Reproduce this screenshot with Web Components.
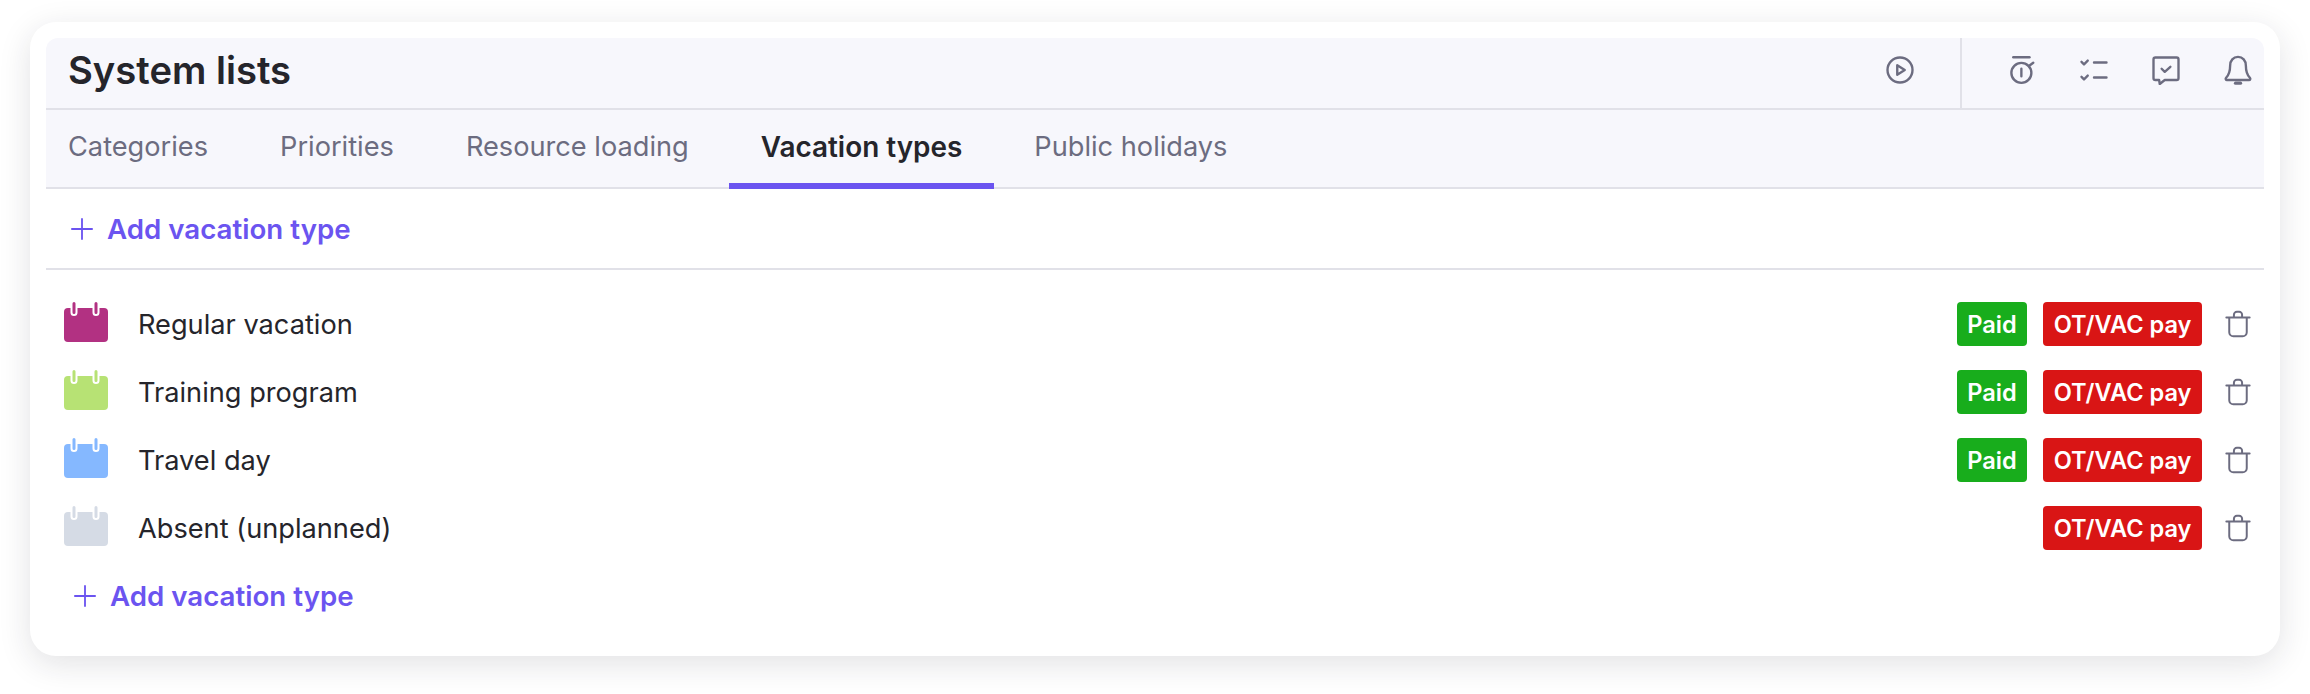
<!DOCTYPE html>
<html>
<head>
<meta charset="utf-8">
<style>
  html, body { margin: 0; background: #fff; }
  body { font-family: Inter, "Liberation Sans", sans-serif; height: 694px; overflow: hidden; }
</style>
</head>
<body>
<system-lists></system-lists>

<script>
// Icon paths, all on a 24x24 box
const ICONS = {
  play: '<circle cx="12" cy="12" r="10"/><path d="M9.800 8.200v7.600l6-3.800z"/>',
  timer: '<path d="M5 1.800h13"/><circle cx="11.500" cy="14.300" r="8"/><path d="M11.500 11v6M17.500 8.800l3.500-2.600"/>',
  tasks: '<path d="M2 5.500l2 2 3-3M2 17.500l2 2 3-3M12 6h10M12 18h10"/>',
  comment: '<path d="M3.500 2h17a1.500 1.500 0 0 1 1.500 1.500v15a1.500 1.500 0 0 1-1.500 1.500h-9.500l-4 3.200-.5-3.200H3.500A1.500 1.500 0 0 1 2 18.500v-15A1.500 1.500 0 0 1 3.500 2z"/><path d="M8.500 11l2.500 2.500 4.500-4"/>',
  bell: '<path d="M12 1.500c-3.800 0-6.300 3-6.300 7 0 5-.9 7.200-3.200 9.700-.7.800-.3 1.800.7 1.800h17.600c1 0 1.400-1 .7-1.800-2.300-2.500-3.200-4.700-3.200-9.700 0-4-2.500-7-6.300-7z"/><path d="M10 22.500h4" stroke-width="2.600"/>',
  trash: '<path d="M2 6.500h20M8.500 6V4a2.500 2.500 0 0 1 2.500-2.500h2A2.500 2.500 0 0 1 15.500 4v2M4.500 7v12a3.500 3.500 0 0 0 3.500 3.500h8a3.500 3.500 0 0 0 3.500-3.500V7"/>',
  plus: '<path d="M12 1v22M1 12h22"/>'
};

class UiIcon extends HTMLElement {
  connectedCallback() {
    const size = this.getAttribute('size') || 24;
    const name = this.getAttribute('name');
    const width = this.getAttribute('stroke') || 2;
    this.attachShadow({ mode: 'open' });
    this.shadowRoot.innerHTML = `
      <style>
        :host { display: inline-flex; flex: none; }
        svg { display: block; fill: none; stroke: currentColor; stroke-linecap: round; stroke-linejoin: round; }
      </style>
      <svg width="${size}" height="${size}" viewBox="0 0 24 24" stroke-width="${width}">${ICONS[name]}</svg>
    `;
  }
}
customElements.define('ui-icon', UiIcon);

class AddButton extends HTMLElement {
  constructor() {
    super();
    this.attachShadow({ mode: 'open' });
    this.shadowRoot.innerHTML = `
      <style>
        :host {
          display: flex;
          align-items: center;
          gap: 14px;
          color: #6b54f0;
          font-size: 27.700px;
          font-weight: 600;
          line-height: 32px;
          cursor: pointer;
        }
      </style>
      <ui-icon name="plus" size="22" stroke="2"></ui-icon>
      <slot></slot>
    `;
  }
}
customElements.define('add-button', AddButton);

class TagBadge extends HTMLElement {
  constructor() {
    super();
    this.attachShadow({ mode: 'open' });
    this.shadowRoot.innerHTML = `
      <style>
        :host {
          display: inline-flex;
          align-items: center;
          height: 44px;
          padding: 0 10.500px;
          border-radius: 4px;
          color: #fff;
          font-size: 23.600px;
          font-weight: 600;
          background: var(--badge-color);
        }
      </style>
      <slot></slot>
    `;
  }
}
customElements.define('tag-badge', TagBadge);

class VacationRow extends HTMLElement {
  connectedCallback() {
    const color = this.getAttribute('color');
    const paid = this.hasAttribute('paid');
    this.attachShadow({ mode: 'open' });
    this.shadowRoot.innerHTML = `
      <style>
        :host {
          display: flex;
          align-items: center;
          height: 68px;
          padding: 0 12px 0 18px;
          color: #25252b;
          font-size: 27.200px;
        }
        .cal { display: block; margin: -4px 28px 0 0; flex: none; }
        .name { flex: 1; }
        .tags { display: flex; gap: 16px; }
        .del { color: #6c6c80; margin-left: 22px; }
        .paid { --badge-color: #18ad1c; }
        .ot { --badge-color: #d91515; }
      </style>
      <svg class="cal" width="46" height="40" viewBox="0 0 46 40">
        <rect x="0" y="6" width="44" height="34" rx="4" fill="${color}"/>
        <path d="M10 0v10.500M32 0v10.500" stroke="#fff" stroke-width="7" stroke-linecap="round"/>
        <path d="M10 1.500v9M32 1.500v9" stroke="${color}" stroke-width="3" stroke-linecap="round"/>
      </svg>
      <span class="name"><slot></slot></span>
      <div class="tags">
        ${paid ? '<tag-badge class="paid">Paid</tag-badge>' : ''}
        <tag-badge class="ot">OT/VAC pay</tag-badge>
      </div>
      <ui-icon class="del" name="trash" size="28" stroke="1.700"></ui-icon>
    `;
  }
}
customElements.define('vacation-row', VacationRow);

class SystemLists extends HTMLElement {
  constructor() {
    super();
    this.attachShadow({ mode: 'open' });
    this.shadowRoot.innerHTML = `
      <style>
        :host {
          display: block;
          box-sizing: border-box;
          width: 2250px;
          height: 634px;
          margin: 22px 0 0 30px;
          padding: 16px;
          background: #fff;
          border-radius: 26px;
          box-shadow: 0 8px 32px rgba(30, 30, 50, .13);
        }
        header {
          display: flex;
          align-items: center;
          height: 70px;
          padding-left: 22px;
          background: #f7f7fc;
          border-bottom: 2px solid #e1e1e8;
          border-radius: 12px 12px 0 0;
        }
        h1 { flex: 1; margin: 0 0 6px; font-size: 38.200px; font-weight: 600; color: #25252b; }
        .actions { display: flex; align-items: center; align-self: stretch; padding-right: 11px; color: #6c6c80; }
        .actions ui-icon { margin-bottom: 6px; }
        .play { margin-right: 45px; }
        .sep { align-self: stretch; width: 2px; background: #e1e1e8; margin-right: 45px; }
        .actions .gap { margin-right: 42px; }
        nav {
          display: flex;
          gap: 8px;
          height: 79px;
          padding-left: 22px;
          background: #f7f7fc;
          border-bottom: 2px solid #e1e1e8;
          box-sizing: border-box;
          font-size: 27.200px;
          color: #6c6c80;
        }
        nav a {
          display: flex;
          align-items: center;
          padding: 0 32px;
          margin-bottom: -2px;
          border-bottom: 6px solid transparent;
        }
        nav a:first-child { padding-left: 0; }
        nav a.on {
          color: #25252b;
          font-weight: 600;
          font-size: 27.900px;
          border-bottom-color: #6b54f0;
        }
        .top { height: 79px; display: flex; align-items: center; padding-left: 25px; border-bottom: 2px solid #e1e1e8; }
        .list { padding-top: 20px; }
        .bottom { padding: 18px 0 0 28px; }
      </style>
      <header>
        <h1>System lists</h1>
        <div class="actions">
          <ui-icon class="play" name="play" size="30" stroke="1.900"></ui-icon>
          <div class="sep"></div>
          <ui-icon class="gap" name="timer" size="30" stroke="1.900"></ui-icon>
          <ui-icon class="gap" name="tasks" size="30" stroke="1.900"></ui-icon>
          <ui-icon class="gap" name="comment" size="30" stroke="1.900"></ui-icon>
          <ui-icon name="bell" size="30" stroke="1.900"></ui-icon>
        </div>
      </header>
      <nav>
        <a>Categories</a>
        <a>Priorities</a>
        <a>Resource loading</a>
        <a class="on">Vacation types</a>
        <a>Public holidays</a>
      </nav>
      <div class="top"><add-button>Add vacation type</add-button></div>
      <div class="list">
        <vacation-row color="#b23182" paid>Regular vacation</vacation-row>
        <vacation-row color="#b7e274" paid>Training program</vacation-row>
        <vacation-row color="#85b8ff" paid>Travel day</vacation-row>
        <vacation-row color="#d5dbe5">Absent (unplanned)</vacation-row>
      </div>
      <div class="bottom"><add-button>Add vacation type</add-button></div>
    `;
  }
}
customElements.define('system-lists', SystemLists);
</script>
</body>
</html>
